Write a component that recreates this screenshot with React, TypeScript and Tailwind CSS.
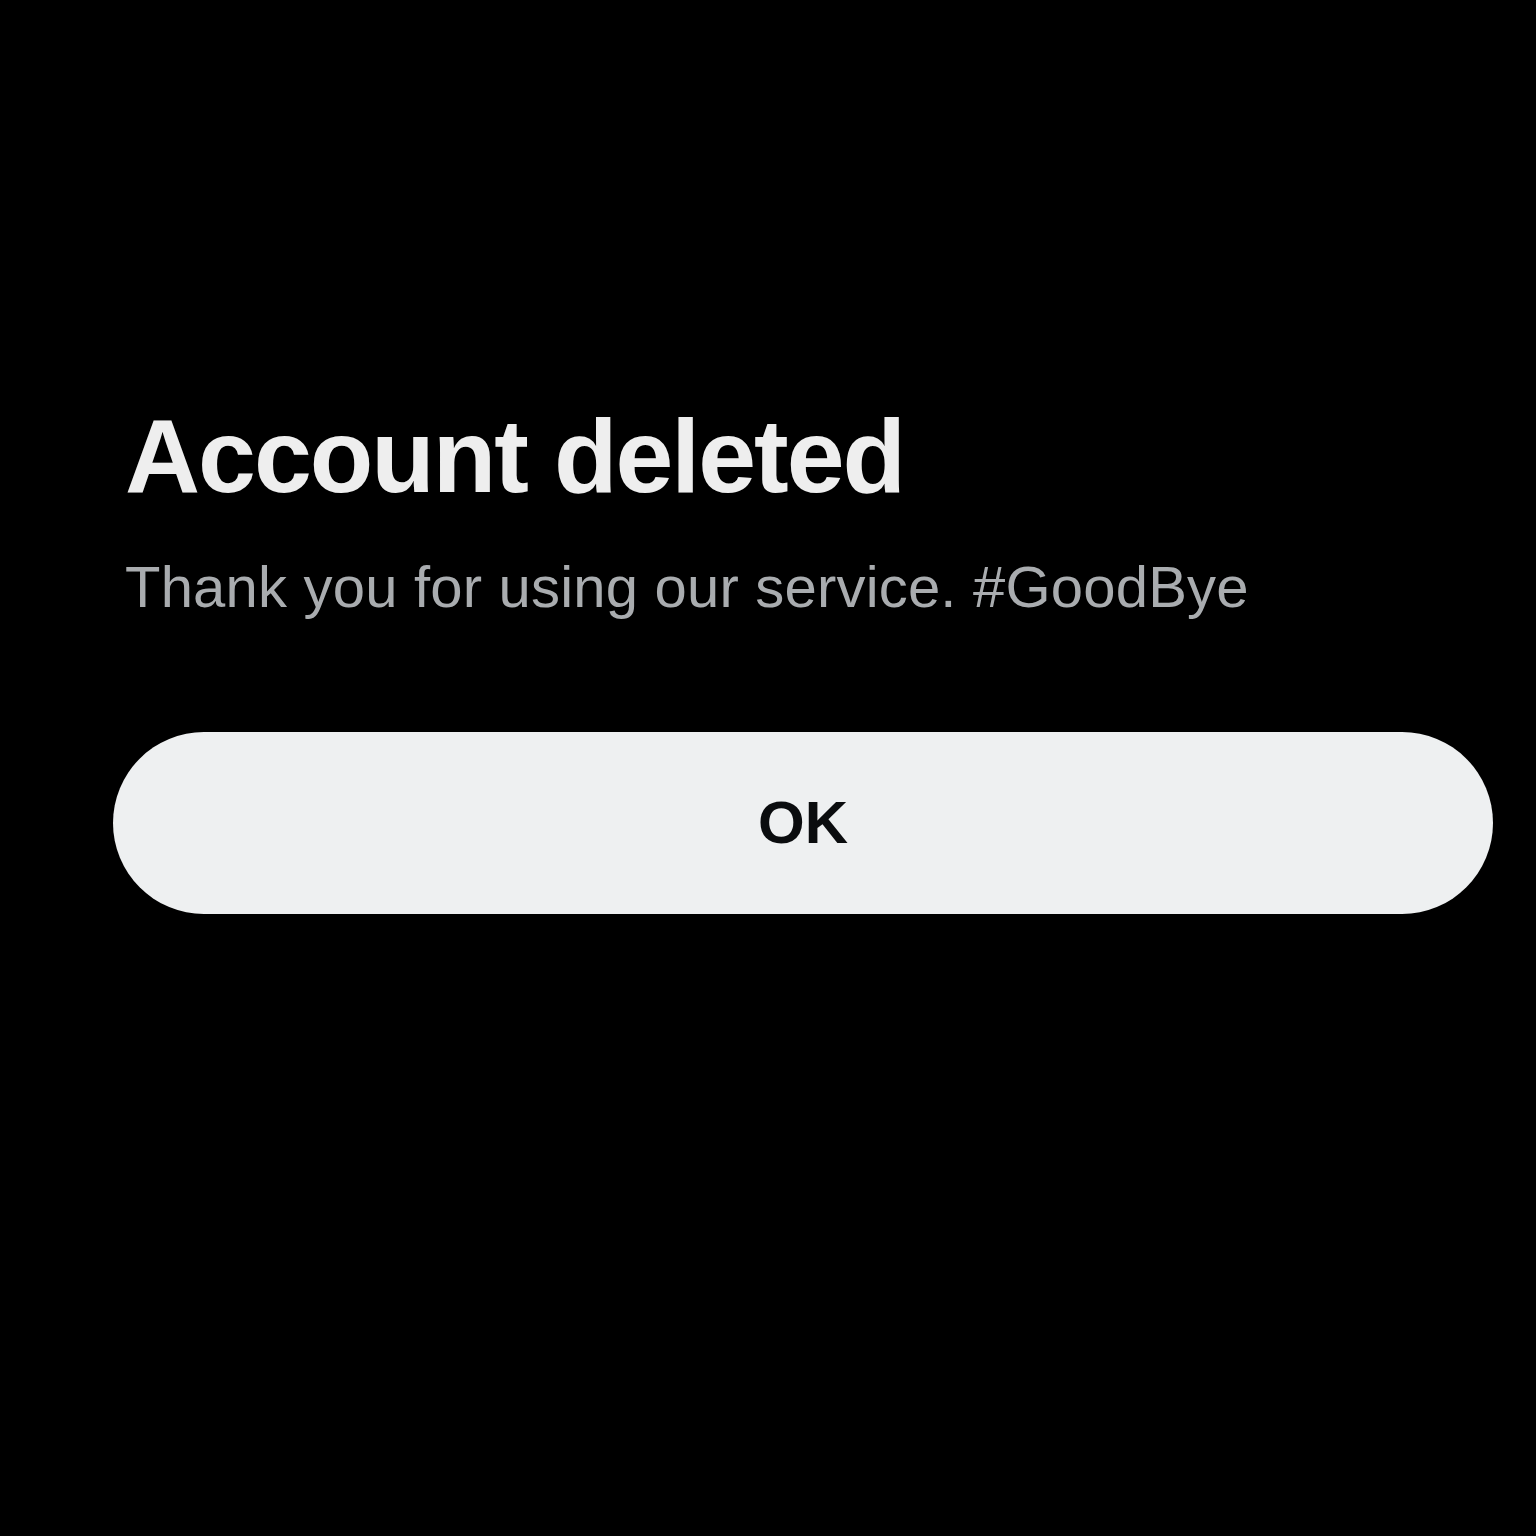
export default function App() {
  return (
    <div className="min-h-[1536px] w-full bg-black font-['Liberation_Sans',Arial,sans-serif]">
      <div className="flex flex-col pl-[113px] pr-[43px] pt-[404px]">
        <h1 className="pl-3 text-[104px] font-bold leading-none tracking-[-2px] text-[#eeeeee]">
          Account deleted
        </h1>
        <p className="mt-[50px] pl-3 text-[58px] leading-none tracking-[0.2px] text-[#a9acaf]">
          Thank you for using our service. #GoodBye
        </p>
        <button className="mt-[116px] flex h-[182px] w-full items-center justify-center rounded-full bg-[#eef0f1] text-[60px] font-bold text-[#0a0c0e]">
          OK
        </button>
      </div>
    </div>
  );
}
